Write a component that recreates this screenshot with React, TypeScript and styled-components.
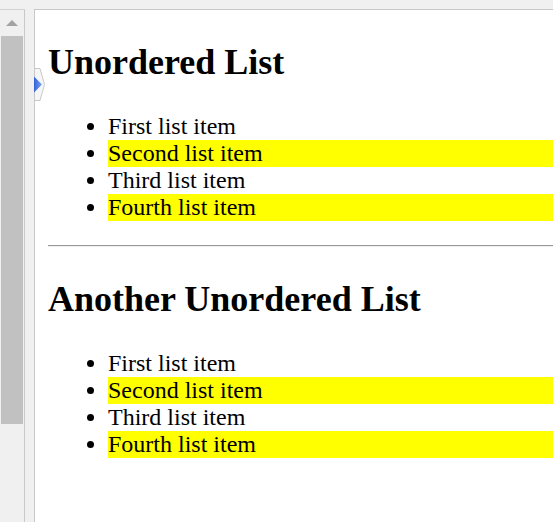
import React from "react";
import styled, { createGlobalStyle } from "styled-components";

const Global = createGlobalStyle`
  html, body { margin: 0; padding: 0; background: #f0f0f0; overflow: hidden; }
  #root { width: 553px; height: 522px; }
`;

const Frame = styled.div`
  display: flex;
  height: 522px;
  box-sizing: border-box;
  padding-top: 9px;
  background: #f0f0f0;
  overflow: hidden;
`;

const Sidebar = styled.div`
  width: 24px;
  flex: none;
  border-top: 1px solid #d2d2d2;
  border-right: 1px solid #c8c8c8;
  display: flex;
  flex-direction: column;
`;

const ArrowButton = styled.div`
  height: 26px;
  display: flex;
  align-items: center;
  justify-content: center;
`;

const Thumb = styled.div`
  margin-left: 1px;
  width: 22px;
  height: 388px;
  background: #c1c1c1;
`;

const Gutter = styled.div`
  width: 9px;
  flex: none;
`;

const Panel = styled.div`
  position: relative;
  flex: 1;
  min-width: 0;
  background: #ffffff;
  border-top: 1px solid #c8c8c8;
  border-left: 1px solid #c8c8c8;
  padding-left: 13px;
  font-family: "Liberation Serif", "Times New Roman", serif;
  color: #000;
`;

const Tab = styled.svg`
  position: absolute;
  left: -1px;
  top: 58px;
`;

const Heading = styled.h1`
  margin: 32px 0 31px;
  font-size: 36px;
  line-height: 40px;
  font-weight: bold;
`;

const List = styled.ul`
  margin: 0 0 24px;
  padding-left: 60px;
  list-style: disc;
`;

const Item = styled.li<{ $highlight?: boolean }>`
  font-size: 24px;
  line-height: 27px;
  background: ${(p) => (p.$highlight ? "#ffff00" : "transparent")};
`;

const Rule = styled.hr`
  margin: 0;
  height: 0;
  border: none;
  border-top: 1px solid #9a9a9a;
  border-bottom: 1px solid #eeeeee;
`;

const items = [
  { text: "First list item", hl: false },
  { text: "Second list item", hl: true },
  { text: "Third list item", hl: false },
  { text: "Fourth list item", hl: true },
];

export default function App() {
  return (
    <>
      <Global />
      <Frame>
        <Sidebar>
          <ArrowButton>
            <svg width="12" height="6" viewBox="0 0 12 6">
              <polygon points="0,6 12,6 6,0" fill="#a3a3a3" />
            </svg>
          </ArrowButton>
          <Thumb />
        </Sidebar>
        <Gutter />
        <Panel>
          <Tab width="12" height="33" viewBox="0 0 12 33">
            <defs>
              <linearGradient id="tabBlue" x1="0" y1="0" x2="1" y2="0">
                <stop offset="0" stopColor="#3560d8" />
                <stop offset="1" stopColor="#79a6f2" />
              </linearGradient>
            </defs>
            <polygon
              points="0.5,0.5 6,0.5 10.5,16.5 6,32.5 0.5,32.5"
              fill="#f6f6f6"
              stroke="#c8c8c8"
            />
            <polygon points="0,8.5 8,16.5 0,24.5" fill="url(#tabBlue)" />
          </Tab>
          <Heading>Unordered List</Heading>
          <List>
            {items.map((it) => (
              <Item key={it.text} $highlight={it.hl}>
                {it.text}
              </Item>
            ))}
          </List>
          <Rule />
          <Heading>Another Unordered List</Heading>
          <List>
            {items.map((it) => (
              <Item key={it.text} $highlight={it.hl}>
                {it.text}
              </Item>
            ))}
          </List>
        </Panel>
      </Frame>
    </>
  );
}
